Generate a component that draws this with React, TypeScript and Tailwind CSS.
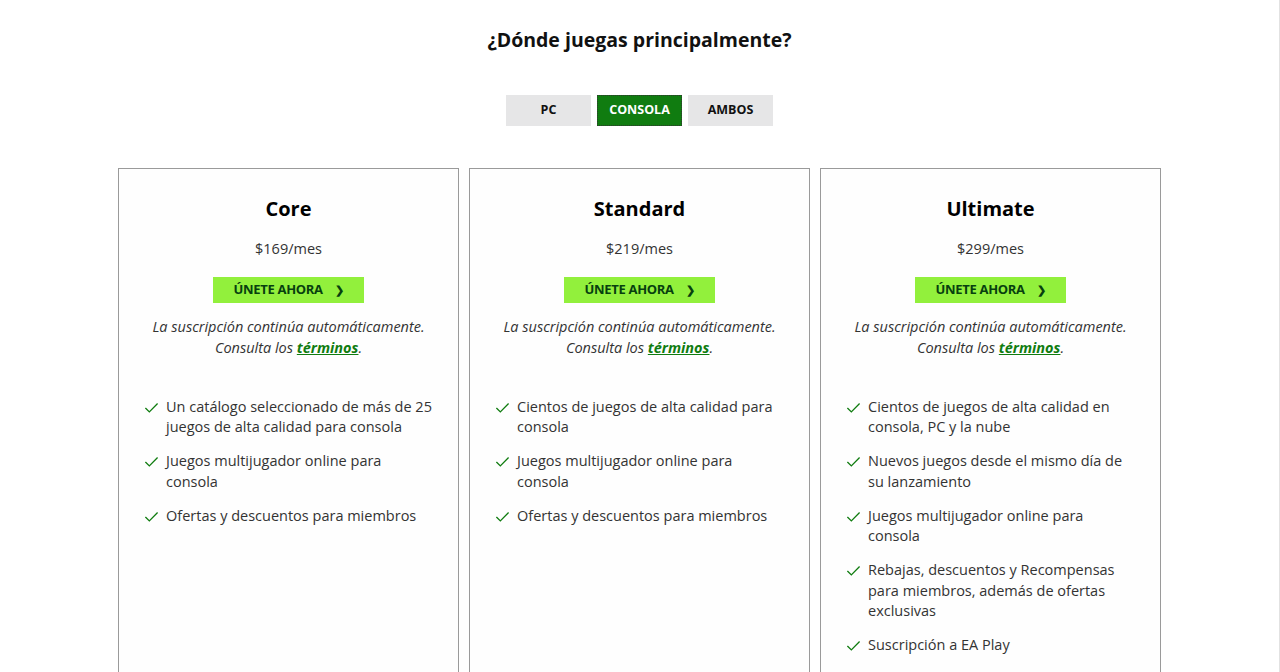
import React from 'react';

type Plan = {
  name: string;
  price: string;
  features: string[];
};

const plans: Plan[] = [
  {
    name: 'Core',
    price: '$169/mes',
    features: [
      'Un catálogo seleccionado de más de 25 juegos de alta calidad para consola',
      'Juegos multijugador online para consola',
      'Ofertas y descuentos para miembros',
    ],
  },
  {
    name: 'Standard',
    price: '$219/mes',
    features: [
      'Cientos de juegos de alta calidad para consola',
      'Juegos multijugador online para consola',
      'Ofertas y descuentos para miembros',
    ],
  },
  {
    name: 'Ultimate',
    price: '$299/mes',
    features: [
      'Cientos de juegos de alta calidad en consola, PC y la nube',
      'Nuevos juegos desde el mismo día de su lanzamiento',
      'Juegos multijugador online para consola',
      'Rebajas, descuentos y Recompensas para miembros, además de ofertas exclusivas',
      'Suscripción a EA Play',
    ],
  },
];

const Check = () => (
  <svg viewBox="0 0 16 16" className="w-[15px] h-[15px] mt-[3px] shrink-0" fill="none">
    <path d="M1.5 8.5l4.2 4.2L14.5 3.8" stroke="#107c10" strokeWidth="1.4" />
  </svg>
);

const PlanCard = ({ plan }: { plan: Plan }) => (
  <div className="border border-[#9a9a9a] bg-[#fefefe] px-[25px] pt-[27px] pb-16">
    <h2 className="text-center text-[20px] font-bold text-black leading-[26px]">{plan.name}</h2>
    <p className="text-center text-[14.5px] text-[#333] mt-[16px]">{plan.price}</p>
    <div className="flex justify-center mt-[17px]">
      <button className="w-[151px] h-[26px] bg-[#92f03c] text-[#07400f] text-[13px] font-bold flex items-center justify-center gap-3 tracking-tight">
        ÚNETE AHORA
        <span className="text-[11px] font-extrabold">❯</span>
      </button>
    </div>
    <p className="text-center italic text-[14.5px] leading-[21px] text-[#333] mt-[13px]">
      La suscripción continúa automáticamente.
      <br />
      Consulta los{' '}
      <a className="font-bold underline text-[#107c10]" href="#">
        términos
      </a>
      .
    </p>
    <ul className="mt-[39px] flex flex-col gap-[13.5px]">
      {plan.features.map((f) => (
        <li key={f} className="flex gap-[7px] text-[14.5px] leading-[20.5px] text-[#333]">
          <Check />
          <span>{f}</span>
        </li>
      ))}
    </ul>
  </div>
);

export default function App() {
  return (
    <div
      className="h-[672px] overflow-hidden bg-white border-r border-[#e2e2e2]"
      style={{ fontFamily: '"Open Sans", "Noto Sans", sans-serif' }}
    >
      <h1 className="text-center text-[19.5px] font-bold text-[#111] pt-[26px] leading-[28px]">
        ¿Dónde juegas principalmente?
      </h1>
      <div className="flex justify-center gap-[6px] mt-[41px]">
        <button className="w-[85px] h-[31px] bg-[#e6e6e7] text-[12.5px] font-bold text-[#111]">PC</button>
        <button className="w-[85px] h-[31px] bg-[#107c10] text-[12.5px] font-bold text-white outline outline-1 outline-dotted outline-[#333] -outline-offset-1">
          CONSOLA
        </button>
        <button className="w-[85px] h-[31px] bg-[#e6e6e7] text-[12.5px] font-bold text-[#111]">AMBOS</button>
      </div>
      <div className="mt-[42px] mx-auto w-[1043px] grid grid-cols-3 gap-[10px]">
        {plans.map((p) => (
          <PlanCard key={p.name} plan={p} />
        ))}
      </div>
    </div>
  );
}
